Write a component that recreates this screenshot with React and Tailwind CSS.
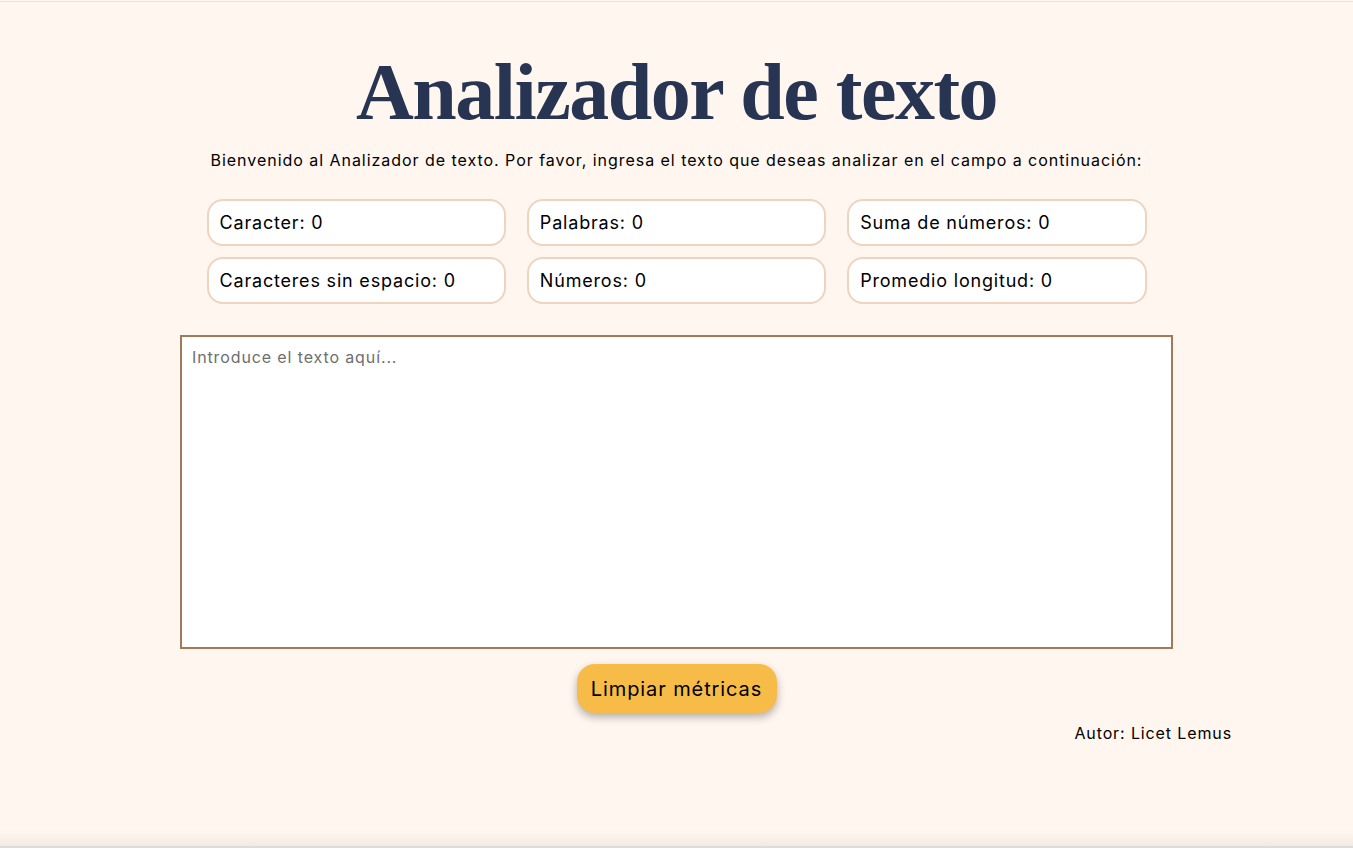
import React, { useState } from 'react';

const metricsOf = (text) => {
  const words = text.trim() ? text.trim().split(/\s+/) : [];
  const nums = text.match(/-?\d+(\.\d+)?/g) || [];
  const sum = nums.reduce((s, n) => s + parseFloat(n), 0);
  const avg = words.length ? (words.reduce((s, w) => s + w.length, 0) / words.length).toFixed(2) : 0;
  return [
    ['Caracter', text.length],
    ['Palabras', words.length],
    ['Suma de números', sum],
    ['Caracteres sin espacio', text.replace(/\s/g, '').length],
    ['Números', nums.length],
    ['Promedio longitud', avg],
  ];
};

const App = () => {
  const [text, setText] = useState('');
  const metrics = metricsOf(text);

  return (
    <div className="h-[848px] bg-[#fff6f0] flex flex-col font-['Inter','Liberation_Sans',sans-serif] tracking-[0.055em] text-black overflow-hidden">
      <div className="mt-px h-px bg-[#f0e2cc]" />

      {/* Main */}
      <div className="flex-1 flex flex-col items-center">
        <h1 className="mt-[45px] text-[80px] leading-[90px] font-black text-[#273552] font-['Liberation_Serif','DejaVu_Serif',serif] tracking-[-1.5px]">
          Analizador de texto
        </h1>
        <p className="mt-[13px] text-[16px] leading-5 tracking-[0.06em]">
          Bienvenido al Analizador de texto. Por favor, ingresa el texto que deseas analizar en el campo a continuación:
        </p>

        {/* Metrics */}
        <ul className="mt-[29px] grid grid-cols-3 gap-x-[21px] gap-y-[11px] w-[940px]">
          {metrics.map(([label, value]) => (
            <li
              key={label}
              className="h-[47px] flex items-center px-[11px] bg-white border-2 border-[#ecd4bf] rounded-[16px] text-[18px] tracking-[0.045em]"
            >
              {label}: {value}
            </li>
          ))}
        </ul>

        <textarea
          value={text}
          onChange={(e) => setText(e.target.value)}
          placeholder="Introduce el texto aquí..."
          className="mt-[31px] w-[993px] h-[314px] bg-white border-2 border-[#a57958] px-[10px] py-[10px] text-[16px] leading-5 resize-none outline-none placeholder:text-[#6e6e6e]"
        />

        <button
          onClick={() => setText('')}
          className="mt-[15px] w-[200px] h-[49px] rounded-[18px] bg-[#f7bc48] text-[20px] tracking-[0.045em] shadow-[0_4px_8px_rgba(0,0,0,0.3)]"
        >
          Limpiar métricas
        </button>

        <div className="w-[1111px] flex justify-end mt-[10px]">
          <p className="text-[16px] leading-5">Autor: Licet Lemus</p>
        </div>
      </div>

      {/* bottom edge */}
      <div className="h-[16px] bg-gradient-to-b from-[#fff6f0] to-[#f3ebe3]" />
      <div className="h-[2px] bg-[#dcdcdc]" />
    </div>
  );
};

export default App;
